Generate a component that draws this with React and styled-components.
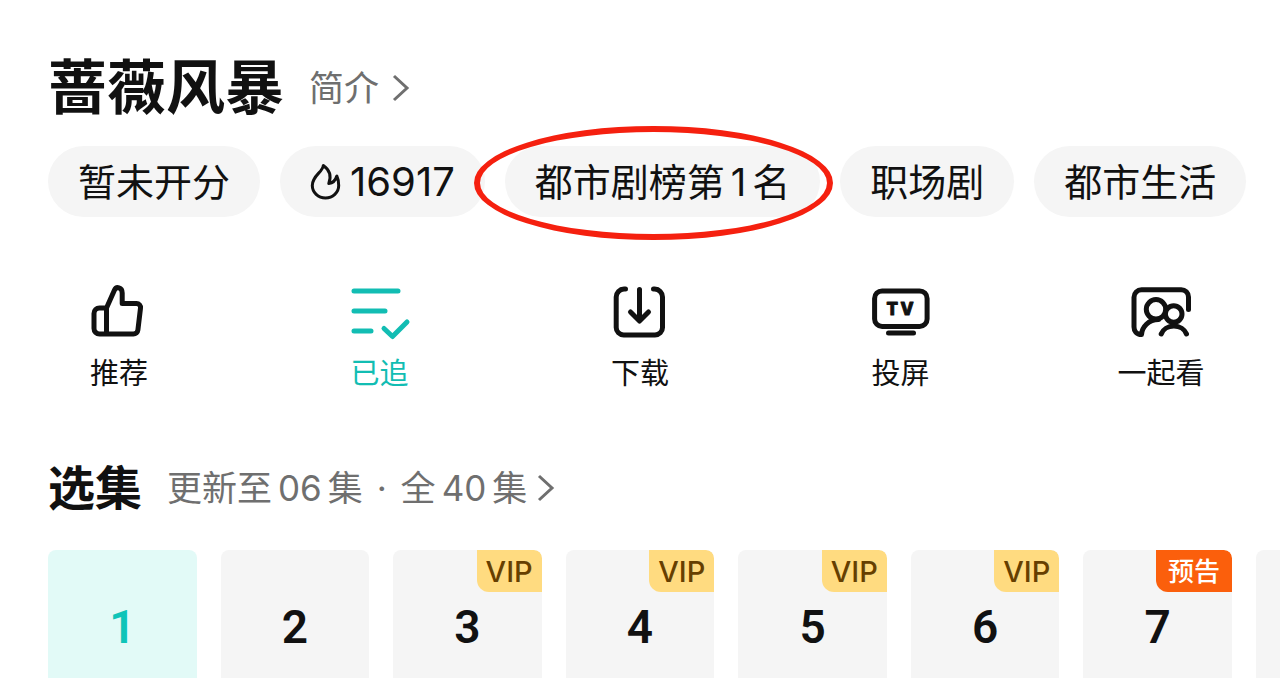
import React from "react";
import styled, { createGlobalStyle } from "styled-components";

const GlobalStyle = createGlobalStyle`
  *, *::before, *::after { box-sizing: border-box; }
  body {
    margin: 0;
    background: #fff;
    color: #111;
    font-family: Inter, "Noto Sans CJK SC", sans-serif;
  }
  button {
    margin: 0;
    padding: 0;
    border: 0;
    background: none;
    color: inherit;
    font: inherit;
    cursor: pointer;
  }
  h1, h2, ul { margin: 0; padding: 0; }
  ul { list-style: none; }
  svg { display: block; flex: none; overflow: visible; }
`;

const Screen = styled.main`
  height: 100vh;
  overflow: hidden;
  padding: 58px 0 0 48px;
`;

const Heading = styled.header`
  display: flex;
  align-items: center;
  gap: 25px;
`;

const Title = styled.h1`
  font-size: 59px;
  line-height: 60px;
  font-weight: 700;
  white-space: nowrap;
`;

const SectionTitle = styled.h2`
  font-size: 47px;
  line-height: 60px;
  font-weight: 700;
  white-space: nowrap;
`;

const MoreButton = styled.button`
  display: flex;
  align-items: center;
  gap: ${(p) => p.$gap}px;
  color: #6f6f6f;
  font-size: 35px;
  line-height: 60px;
  white-space: nowrap;
`;

const Chips = styled.ul`
  display: flex;
  gap: 20px;
  margin-top: 28px;
`;

const Chip = styled.li`
  position: relative;
  flex: none;

  button {
    display: flex;
    align-items: center;
    gap: ${(p) => (p.$numeric ? 9 : 10)}px;
    height: 71px;
    padding: 0 30px;
    border-radius: 36px;
    background: #f5f5f5;
    font-size: ${(p) => (p.$numeric ? 40 : 38)}px;
    line-height: 48px;
    white-space: nowrap;
  }
`;

const Num = styled.span`
  margin: 0 6px;
`;

const Dot = styled.span`
  margin: 0 4px;
`;

const Ring = styled.span`
  position: absolute;
  z-index: 1;
  inset: -20px -13px -23px -31px;
  border: 6px solid #f5200f;
  border-radius: 50%;
  pointer-events: none;
`;

const Actions = styled.nav`
  display: flex;
  justify-content: space-between;
  margin-top: 65px;
  padding: 0 75px 0 27px;
`;

const Action = styled.button`
  display: flex;
  flex-direction: column;
  align-items: center;
  gap: 12px;
  width: 88px;
  color: ${(p) => (p.$active ? "#12bdb3" : "#111")};
  font-size: 29px;
  line-height: 40px;
  white-space: nowrap;
`;

const EpisodeHeading = styled(Heading)`
  margin-top: 64px;
`;

const Episodes = styled.ul`
  display: flex;
  gap: 24px;
  margin-top: 32px;
  overflow: hidden;
`;

const Episode = styled.li`
  flex: 0 0 calc((100% - 192px) / 7);

  button {
    position: relative;
    width: 100%;
    height: 154px;
    border-radius: 8px;
    overflow: hidden;
    background: ${(p) => (p.$active ? "#e2faf7" : "#f5f5f5")};
    color: ${(p) => (p.$active ? "#0fc4b8" : "#111")};
    font-family: Roboto, sans-serif;
    font-size: 46px;
    font-weight: 600;
    line-height: 54px;
  }
`;

const Tag = styled.span`
  position: absolute;
  top: 0;
  right: 0;
  height: 42px;
  padding: 0 ${(p) => (p.$trailer ? 12 : 9)}px;
  border-radius: 0 8px 0 12px;
  background: ${(p) => (p.$trailer ? "#fb5f0c" : "#ffdb80")};
  color: ${(p) => (p.$trailer ? "#fff" : "#663f00")};
  font-family: Inter, "Noto Sans CJK SC", sans-serif;
  font-size: ${(p) => (p.$trailer ? 26 : 29)}px;
  font-weight: 500;
  line-height: 44px;
`;

const Chevron = () => (
  <svg width="18" height="30" viewBox="0 0 18 30" fill="none" stroke="currentColor" strokeWidth="3" aria-hidden="true">
    <path d="M2 3L15 15L2 27" />
  </svg>
);

const Flame = () => (
  <svg width="31" height="38" viewBox="0 0 31 38" fill="none" stroke="currentColor" strokeWidth="3" strokeLinejoin="round" aria-hidden="true">
    <path d="M13.300 2.500C13 9 2.300 12.500 2.300 22.500A13.200 12.500 0 0 0 28.700 22.500C28.700 18.500 28 15.500 26.800 13C25.500 17.500 23.500 20 18.800 20.500C20.500 16 22 8.500 13.300 2.500Z" />
  </svg>
);

const Icon = ({ children }) => (
  <svg width="60" height="60" viewBox="0 0 60 60" fill="none" stroke="currentColor" strokeWidth="5" strokeLinecap="round" strokeLinejoin="round" aria-hidden="true">
    {children}
  </svg>
);

const icons = {
  like: (
    <Icon>
      <path d="M17.500 52V26L25.500 8C27.200 4.200 33.200 5 33.200 11V21.500H47.500a4 4 0 0 1 4 4.600l-2.600 21.900a4.500 4.500 0 0 1-4.500 4H10.500a5.500 5.500 0 0 1-5.500-5.500V31.500a5.500 5.500 0 0 1 5.500-5.500h7" />
    </Icon>
  ),
  followed: (
    <Icon>
      <path d="M4 9H48M4 29H35M4 49H21M34 46.500L42.500 54.500L57 40" />
    </Icon>
  ),
  download: (
    <Icon>
      <path d="M15.500 7H14A8 8 0 0 0 6.200 15V45.500A7.500 7.500 0 0 0 13.700 53H45A7.500 7.500 0 0 0 52.500 45.500V15A8 8 0 0 0 44.700 7H43.500M29.500 7.500V38.500M20.500 30L29.500 39L38.500 30" />
    </Icon>
  ),
  tv: (
    <Icon>
      <rect x="3.600" y="8.900" width="52.500" height="35.500" rx="7.500" />
      <path d="M17.500 51H42.500" />
      <text x="15.500 29.500" y="33" fill="currentColor" strokeWidth="1" fontFamily="Inter, sans-serif" fontSize="17" fontWeight="800">
        TV
      </text>
    </Icon>
  ),
  together: (
    <Icon>
      <path d="M57.500 27.500V15A7.300 7.300 0 0 0 50.200 7.700H10.500A7.500 7.500 0 0 0 3 15.200V45C3 49 5.500 52.500 10.500 52.500C11 45 17.500 37.500 27.500 37.500" />
      <circle cx="25" cy="27.300" r="9.700" />
      <circle cx="42.700" cy="32" r="8.300" />
      <path d="M30.200 52A13.300 11.500 0 0 1 55.500 52" />
    </Icon>
  ),
};

const actions = [
  { id: "like", label: "推荐" },
  { id: "followed", label: "已追", active: true },
  { id: "download", label: "下载" },
  { id: "tv", label: "投屏" },
  { id: "together", label: "一起看" },
];

const episodes = [
  { no: 1, active: true },
  { no: 2 },
  { no: 3, tag: "VIP" },
  { no: 4, tag: "VIP" },
  { no: 5, tag: "VIP" },
  { no: 6, tag: "VIP" },
  { no: 7, tag: "预告" },
];

export default function App() {
  return (
    <Screen lang="zh-CN">
      <GlobalStyle />
      <Heading>
        <Title>蔷薇风暴</Title>
        <MoreButton type="button" $gap={13}>
          简介
          <Chevron />
        </MoreButton>
      </Heading>

      <Chips>
        <Chip><button type="button">暂未开分</button></Chip>
        <Chip $numeric><button type="button"><Flame />16917</button></Chip>
        <Chip>
          <button type="button"><span>都市剧榜第<Num>1</Num>名</span></button>
          <Ring />
        </Chip>
        <Chip><button type="button">职场剧</button></Chip>
        <Chip><button type="button">都市生活</button></Chip>
      </Chips>

      <Actions>
        {actions.map((a) => (
          <Action key={a.id} type="button" $active={a.active}>
            {icons[a.id]}
            {a.label}
          </Action>
        ))}
      </Actions>

      <EpisodeHeading>
        <SectionTitle>选集</SectionTitle>
        <MoreButton type="button" $gap={10}>
          <span>更新至<Num>06</Num>集<Dot> · </Dot>全<Num>40</Num>集</span>
          <Chevron />
        </MoreButton>
      </EpisodeHeading>

      <Episodes>
        {episodes.map((e) => (
          <Episode key={e.no} $active={e.active}>
            <button type="button">
              {e.no}
              {e.tag && <Tag $trailer={e.tag === "预告"}>{e.tag}</Tag>}
            </button>
          </Episode>
        ))}
        <Episode>
          <button type="button" aria-label="第8集" />
        </Episode>
      </Episodes>
    </Screen>
  );
}
